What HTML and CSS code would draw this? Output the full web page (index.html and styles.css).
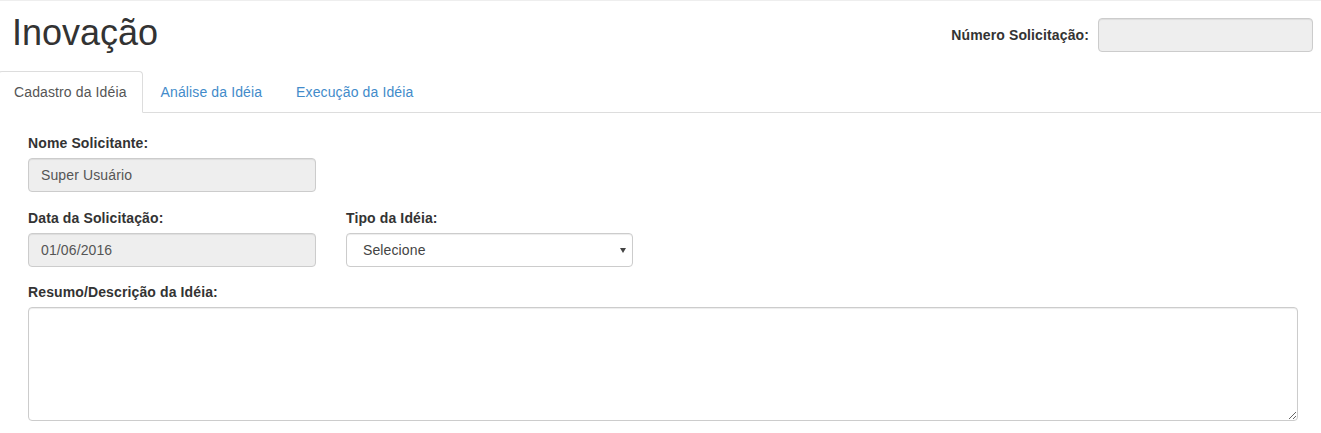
FILE: index.html
```html
<!DOCTYPE html>
<html lang="pt-BR">
<head>
  <meta charset="UTF-8">
  <title>Inovação</title>
  <link rel="stylesheet" href="styles.css">
</head>
<body>

  <div class="page-header">
    <h1>Inovação</h1>
    <div class="numero">
      <label for="numero">Número Solicitação:</label>
      <input type="text" id="numero" class="form-control numero-input" disabled>
    </div>
  </div>

  <ul class="nav-tabs">
    <li class="active"><a href="#">Cadastro da Idéia</a></li>
    <li><a href="#">Análise da Idéia</a></li>
    <li><a href="#">Execução da Idéia</a></li>
  </ul>

  <div class="tab-content">
    <div class="form-group">
      <label>Nome Solicitante:</label>
      <input type="text" class="form-control col-field" value="Super Usuário" disabled>
    </div>

    <div class="row">
      <div class="form-group">
        <label>Data da Solicitação:</label>
        <input type="text" class="form-control col-field" value="01/06/2016" disabled>
      </div>
      <div class="form-group">
        <label>Tipo da Idéia:</label>
        <div class="select-wrap">
          <select class="form-control col-field select">
            <option>Selecione</option>
          </select>
          <span class="caret"></span>
        </div>
      </div>
    </div>

    <div class="form-group">
      <label>Resumo/Descrição da Idéia:</label>
      <textarea class="form-control resumo"></textarea>
    </div>
  </div>

</body>
</html>
```

FILE: styles.css
```css
body {
  margin: 0;
  font-family: 'Liberation Sans', Arial, sans-serif;
  font-size: 14px;
  line-height: 20px;
  letter-spacing: 0.12px;
  color: #333;
  background: #fff;
  border-top: 1px solid #eee;
}
.page-header {
  display: flex;
  align-items: center;
  justify-content: space-between;
  height: 70px;
  padding: 0 8px 0 12px;
}
h1 {
  margin: 0 0 6px 0;
  font-size: 36px;
  font-weight: 500;
  line-height: 39.6px;
  letter-spacing: 0;
}
.numero {
  display: flex;
  align-items: center;
  gap: 9px;
  margin-bottom: 3px;
}
.numero label {
  font-weight: bold;
}
.numero-input {
  width: 215px;
}
.nav-tabs {
  display: flex;
  list-style: none;
  margin: 0 0 0 -2px;
  padding: 0;
  border-bottom: 1px solid #ddd;
}
.nav-tabs li {
  margin-right: 2px;
  margin-bottom: -1px;
}
.nav-tabs a {
  display: block;
  padding: 10px 15px;
  border: 1px solid transparent;
  border-radius: 4px 4px 0 0;
  color: #428bca;
  text-decoration: none;
}
.nav-tabs .active a {
  color: #555;
  background: #fff;
  border-color: #ddd #ddd transparent;
}
.tab-content {
  padding: 20px 23px 0 28px;
}
.form-group {
  margin-bottom: 15px;
}
.form-group label {
  display: block;
  font-weight: bold;
  margin-bottom: 5px;
}
.row {
  display: flex;
  gap: 30px;
  margin-top: 16px;
}
.form-control {
  display: block;
  box-sizing: border-box;
  height: 34px;
  padding: 6px 12px;
  font-family: inherit;
  font-size: 14px;
  line-height: 20px;
  letter-spacing: inherit;
  color: #555;
  background: #fff;
  border: 1px solid #ccc;
  border-radius: 4px;
  box-shadow: inset 0 1px 1px rgba(0,0,0,.075);
}
.form-control:disabled {
  background: #eee;
  opacity: 1;
}
.col-field {
  width: 288px;
}
.row .form-group {
  margin-bottom: 0;
}
.row + .form-group {
  margin-top: 15px;
}
.tab-content > .form-group:first-child {
  margin-bottom: 0;
}
.select-wrap {
  position: relative;
  width: 287px;
}
.select {
  width: 287px;
  padding-left: 16px;
  appearance: none;
  -webkit-appearance: none;
  color: #444;
}
.caret {
  position: absolute;
  right: 7px;
  top: 15px;
  width: 0;
  height: 0;
  border-left: 3px solid transparent;
  border-right: 3px solid transparent;
  border-top: 5px solid #444;
}
.resumo {
  width: 100%;
  height: 114px;
  resize: both;
}
```
